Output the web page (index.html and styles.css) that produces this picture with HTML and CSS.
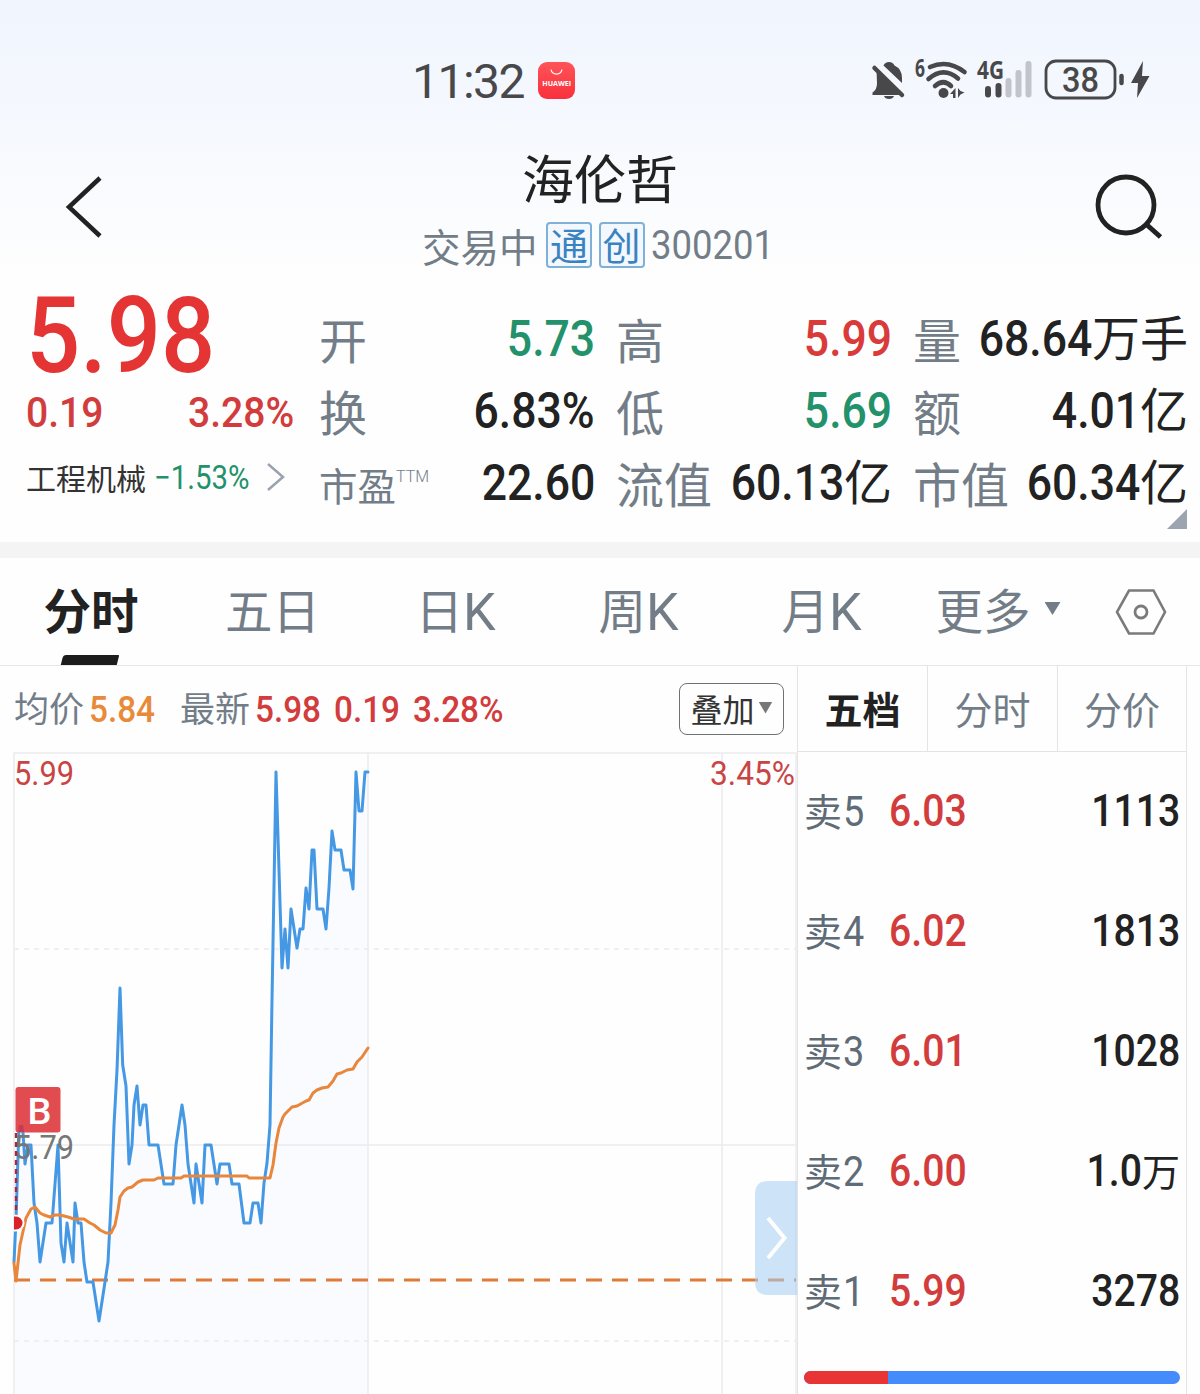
FILE: index.html
```
<!DOCTYPE html>
<html lang="zh-CN">
<head>
    <meta charset="UTF-8">
    <meta name="viewport" content="width=device-width, initial-scale=1.0">
    <title>海伦哲 300201</title>
    <link rel="stylesheet" href="styles.css">
</head>
<body>

    <div class="wrap">
        <div class="top">
            <div class="status">
                <div class="clock">11:32</div>
                <svg class="app_icon" viewBox="0 0 37 37">
                    <defs>
                        <linearGradient id="appRed" x1="0" y1="0" x2="0" y2="1">
                            <stop offset="0" stop-color="#ff5458"/>
                            <stop offset="1" stop-color="#f9303c"/>
                        </linearGradient>
                    </defs>
                    <rect width="37" height="37" rx="9" fill="url(#appRed)"/>
                    <path d="M13 7.500a5.600 5.600 0 0 0 11 0" fill="none" stroke="#fff" stroke-width="1.200"/>
                    <text x="4.200" y="23.600" textLength="29" lengthAdjust="spacingAndGlyphs" class="app_name">HUAWEI</text>
                </svg>
                <svg class="signal" viewBox="860 45 310 70">
                    <!-- bell off -->
                    <g fill="#48484a">
                        <path d="M883.500 65.500q1.500-3.500 5.500-3.500t5.500 3.500q7.500 3.500 7.500 12.500v5z"/>
                        <path d="M876.500 70L902 95H872.500v-2.500q4.500-3 4.500-9z"/>
                        <path d="M884 96h10q-1 3-5 3t-5-3z"/>
                        <path d="M874.500 68L902 95" stroke="#48484a" stroke-width="4.500" stroke-linecap="round"/>
                    </g>
                    <!-- wifi -->
                    <text x="915" y="77" textLength="10" lengthAdjust="spacingAndGlyphs" class="sig_txt">6</text>
                    <g fill="none" stroke="#48484a" stroke-width="4.600" stroke-linecap="round">
                        <path d="M930 67q18-8 34.500 5"/>
                        <path d="M928.500 79q15-13 29.500-0.500"/>
                        <path d="M935 86q8.500-7.500 16 0"/>
                    </g>
                    <circle cx="943.500" cy="93" r="5" fill="#48484a"/>
                    <path d="M950 94l5.500-6v10h-2.500v-4zM958 88v10l2.500-3.500 4-2-4-1.500z" fill="#48484a"/>
                    <!-- mobile signal -->
                    <text x="977" y="79" textLength="27" lengthAdjust="spacingAndGlyphs" class="sig_txt">4G</text>
                    <g stroke-width="6" stroke-linecap="round">
                        <path d="M988 89v5.500M998.500 86v8.500" stroke="#48484a"/>
                        <path d="M1008.500 81v13.500M1018.500 73v21.500M1028.500 64v30.500" stroke="#c1c4c9"/>
                    </g>
                    <!-- battery -->
                    <rect x="1046" y="61" width="69" height="37" rx="10" fill="none" stroke="#48484a" stroke-width="2.800"/>
                    <path d="M1121.500 76v7" stroke="#48484a" stroke-width="4.500" stroke-linecap="round"/>
                    <text x="1062" y="91.500" textLength="37" lengthAdjust="spacingAndGlyphs" class="bat_txt">38</text>
                    <path d="M1143 61l-12 22h7l-1 15 12.500-22h-7.500z" fill="#48484a"/>
                </svg>
            </div>

            <div class="title_bar">
                <svg class="back" viewBox="0 0 40 66"><path d="M35 4L4 33l31 29" fill="none" stroke="#222" stroke-width="4.500"/></svg>
                <div class="title">
                    <h1>海伦哲</h1>
                    <div class="sub">
                        <span>交易中</span>
                        <i class="tag">通</i>
                        <i class="tag">创</i>
                        <b class="num code">300201</b>
                    </div>
                </div>
                <svg class="search" viewBox="0 0 70 66">
                    <circle cx="31" cy="31" r="28" fill="none" stroke="#222" stroke-width="4.800"/>
                    <path d="M51 50l14.500 13" stroke="#222" stroke-width="5"/>
                </svg>
            </div>

            <div class="quote">
                <div class="price">
                    <div class="now"><b class="num">5.98</b></div>
                    <div class="change"><b class="num left">0.19</b><b class="num">3.28%</b></div>
                    <div class="sector">
                        <span>工程机械</span>
                        <b class="num left">−1.53%</b>
                        <svg viewBox="0 0 20 30"><path d="M2 2l15 13L2 28" fill="none" stroke="#9aa3ad" stroke-width="2.500"/></svg>
                    </div>
                </div>
                <div class="item"><span>开</span><em class="green"><b class="num">5.73</b></em></div>
                <div class="item"><span>高</span><em class="red"><b class="num">5.99</b></em></div>
                <div class="item"><span>量</span><em><b class="num">68.64</b>万手</em></div>
                <div class="item"><span>换</span><em><b class="num">6.83%</b></em></div>
                <div class="item"><span>低</span><em class="green"><b class="num">5.69</b></em></div>
                <div class="item"><span>额</span><em><b class="num">4.01</b>亿</em></div>
                <div class="item"><span class="pe">市盈<sup>TTM</sup></span><em><b class="num">22.60</b></em></div>
                <div class="item"><span>流值</span><em><b class="num">60.13</b>亿</em></div>
                <div class="item"><span>市值</span><em><b class="num">60.34</b>亿</em></div>
                <div class="corner"></div>
            </div>
        </div>

        <div class="tabs">
            <div class="tab on">分时</div>
            <div class="tab">五日</div>
            <div class="tab">日<b>K</b></div>
            <div class="tab">周<b>K</b></div>
            <div class="tab">月<b>K</b></div>
            <div class="tab">更多<i class="arrow"></i></div>
            <div class="tab set">
                <svg class="setting" viewBox="0 0 52 46">
                    <path d="M14 1.500h24.500L50 23 38.500 44.500H14L2 23z" fill="none" stroke="#7b7b7b" stroke-width="2.600"/>
                    <circle cx="26" cy="23" r="6" fill="none" stroke="#7b7b7b" stroke-width="2.800"/>
                </svg>
            </div>
        </div>

        <div class="cont">
            <div class="chart_box">
                <div class="info">
                    <span>均价</span><b class="num left orange">5.84</b>
                    <span>最新</span><b class="num left">5.98</b><b class="num left">0.19</b><b class="num left last">3.28%</b>
                    <div class="overlay">叠加<i class="arrow"></i></div>
                </div>
                <svg class="chart" viewBox="0 752 797 642">
                    <!-- area under price -->
                    <path class="area" d="M14 1394V1262L16 1220L19 1125H22.500L25 1164L28 1145H31L34 1203L37 1223L40 1262L46 1223H52L58 1145L61 1243L64 1262L67 1223L73 1262L75 1203L78 1223H81L84 1262L87 1282H93L99 1321L105 1282L108 1262L111 1203L114 1125L117 1070L120 988L122.700 1065L126 1086L129 1164L132 1145L134 1105L137 1086L140 1125L143 1105H146L149 1145H158L164 1184H173L176 1145L182 1105L185 1125L188 1164L194 1203L196 1164L202 1203L205 1145H211L217 1184L220 1164H229L232 1184H239L244 1223H250L253 1203H258L261 1223L264 1183L267 1163L270 1125L272 1000L276 772L279 870L282 968L285 929L288 968L291 909L297 948L300 929H303L306 888L309 909L312 850H314L317 909H323L326 929L329 888L332 831L335 850H341L344 870H350L353 889L356 772L359 811H362L365 772H368V1394Z"/>
                    <!-- grid -->
                    <path class="grid" d="M14 1394V753H796V1394M368 753V1394M722 753V1394M14 1145H796"/>
                    <path class="grid dash" d="M14 949H796M14 1341H796"/>
                    <path class="hold" d="M14 1280H796"/>
                    <path class="line" d="M14 1262L16 1220L19 1125H22.500L25 1164L28 1145H31L34 1203L37 1223L40 1262L46 1223H52L58 1145L61 1243L64 1262L67 1223L73 1262L75 1203L78 1223H81L84 1262L87 1282H93L99 1321L105 1282L108 1262L111 1203L114 1125L117 1070L120 988L122.700 1065L126 1086L129 1164L132 1145L134 1105L137 1086L140 1125L143 1105H146L149 1145H158L164 1184H173L176 1145L182 1105L185 1125L188 1164L194 1203L196 1164L202 1203L205 1145H211L217 1184L220 1164H229L232 1184H239L244 1223H250L253 1203H258L261 1223L264 1183L267 1163L270 1125L272 1000L276 772L279 870L282 968L285 929L288 968L291 909L297 948L300 929H303L306 888L309 909L312 850H314L317 909H323L326 929L329 888L332 831L335 850H341L344 870H350L353 889L356 772L359 811H362L365 772H368"/>
                    <path class="avg" d="M14 1263L16 1281L20 1245L26 1218L31 1209L35 1207L40 1213L44 1215L50 1217L55 1215H60L68 1217L74 1219H84L90 1223L94 1225L100 1230L106 1233H111L115 1225L118 1210L120 1197L124 1191L128 1188L132 1187L138 1182L143 1180H154L158 1178H181L184 1176H247L249 1178H270L273 1165L276 1143L279 1128L283 1117L285 1114L292 1107L297 1106L306 1101L309 1100L313 1093L317 1090L322 1088L328 1087L333 1081L337 1074L341 1073L347 1070L353 1069L357 1062L362 1057L368 1048"/>
                    <!-- labels -->
                    <text x="14" y="785" textLength="60" lengthAdjust="spacingAndGlyphs" class="lbl up">5.99</text>
                    <text x="710" y="785" textLength="85" lengthAdjust="spacingAndGlyphs" class="lbl up">3.45%</text>
                    <text x="14" y="1159" textLength="60" lengthAdjust="spacingAndGlyphs" class="lbl">5.79</text>
                    <!-- buy mark -->
                    <path d="M16 1133V1216" stroke="#a8283c" stroke-width="2.400" stroke-dasharray="5 4"/>
                    <path d="M14 1214.500h2a8.500 8.500 0 0 1 0 17h-2z" fill="#fff"/>
                    <path d="M14 1216.500h2a6.500 6.500 0 0 1 0 13h-2z" fill="#d9232b"/>
                    <rect x="15.500" y="1087" width="45" height="45.500" rx="3" fill="#e04c50"/>
                    <path d="M19 1125h4l1 7h-6z" fill="#c33b54"/>
                    <text x="27.500" y="1124" textLength="24" lengthAdjust="spacingAndGlyphs" class="mark">B</text>
                    <!-- drawer handle -->
                    <path d="M797 1181H768q-13 0-13 13v88q0 13 13 13h29z" fill="#a6cdf2" fill-opacity=".56"/>
                    <path d="M768 1218l16.500 20-16.500 20" fill="none" stroke="#fff" stroke-width="4"/>
                </svg>
            </div>

            <div class="book">
                <div class="book_tabs">
                    <div class="on">五档</div>
                    <div>分时</div>
                    <div>分价</div>
                </div>
                <div class="row"><span>卖<b class="num left">5</b></span><b class="num left">6.03</b><em><b class="num">1113</b></em></div>
                <div class="row"><span>卖<b class="num left">4</b></span><b class="num left">6.02</b><em><b class="num">1813</b></em></div>
                <div class="row"><span>卖<b class="num left">3</b></span><b class="num left">6.01</b><em><b class="num">1028</b></em></div>
                <div class="row"><span>卖<b class="num left">2</b></span><b class="num left">6.00</b><em><b class="num">1.0</b>万</em></div>
                <div class="row"><span>卖<b class="num left">1</b></span><b class="num left">5.99</b><em><b class="num">3278</b></em></div>
                <div class="ratio"><i></i></div>
            </div>
        </div>
    </div>

</body>
</html>
```
FILE: styles.css
```
*{margin:0;padding:0;box-sizing:border-box;}
body{width:1200px;height:1394px;overflow:hidden;background:#fefefe;color:#222;font-family:"Noto Sans CJK SC","Noto Sans",sans-serif;}
i,em{font-style:normal;}
svg{display:block;flex:none;}
.wrap{width:1200px;height:1394px;overflow:hidden;}

/* narrow digits */
.num{display:inline-block;font-family:Roboto,sans-serif;font-weight:500;transform:scaleX(.9);transform-origin:100% 50%;white-space:nowrap;}
.num.left{transform-origin:0 50%;}
.red{color:#d93b3b;}
.green{color:#23916a;}

.top{height:558px;border-bottom:16px solid #f4f4f4;background:linear-gradient(#f0f5fe 0,#f5f8fe 110px,#fefefe 280px);}

/* status bar */
.status{height:140px;display:flex;padding:45px 30px 0 412px;}
.clock{width:126px;height:70px;line-height:73px;font-family:Roboto,sans-serif;font-size:48px;color:#48484a;letter-spacing:-1.500px;}
.app_icon{width:37px;height:37px;margin-top:17px;}
.app_name{font:bold 7px "Open Sans",sans-serif;fill:#fff;}
.signal{width:310px;height:70px;margin-left:auto;}
.sig_txt{font:bold 25px "Open Sans",sans-serif;fill:#48484a;}
.bat_txt{font:500 35px Roboto,sans-serif;fill:#48484a;}

/* title */
.title_bar{height:150px;display:flex;padding:0 35px 0 65px;}
.back{width:40px;height:66px;margin-top:34px;}
.search{width:70px;height:66px;margin:34px 0 0 auto;}
.title{width:360px;margin-left:315px;text-align:center;}
.title h1{height:78px;line-height:73px;font-size:52px;font-weight:400;}
.sub{height:54px;display:flex;align-items:center;padding-left:2px;font-size:38.500px;line-height:50px;color:#727d88;}
.sub span{flex:none;width:124px;text-align:left;white-space:nowrap;}
.tag{flex:none;width:46px;height:46px;line-height:40px;margin-right:6.500px;border:2px solid #7fb0d8;border-radius:4px;background:#f2f8fe;color:#3b82c0;font-size:38px;text-align:center;}
.sub .code{font-size:41px;font-weight:400;transform:scaleX(.89);transform-origin:0 50%;}

/* quote */
.quote{position:relative;height:252px;padding:14px 12px 0 26px;display:grid;grid-template-columns:293px 276px 297px 296px;grid-template-rows:repeat(3,72px);}
.price{grid-row:1 / 4;width:268px;}
.now{height:80px;margin-top:-8px;color:#e43434;}
.now .num{font-size:106px;line-height:80px;transform-origin:0 50%;}
.change{height:72px;display:flex;justify-content:space-between;align-items:center;color:#d23c3c;}
.change .num{font-size:42px;transform:scaleX(.93);}
.sector{height:58px;display:flex;align-items:center;font-size:30px;color:#333;}
.sector span{width:128px;}
.sector .num{width:112px;font-size:33px;font-weight:400;color:#23916a;transform:scaleX(.89);}
.sector svg{width:20px;height:30px;}
.item{display:flex;justify-content:space-between;line-height:68px;font-size:48px;}
.item:nth-child(3n),.item:nth-child(3n+1){padding-left:21px;}
.item span{color:#727d88;}
.item em{margin-top:-3px;white-space:nowrap;}
.item .num{font-size:49.500px;}
.item .pe{font-size:38.500px;line-height:72px;}
.pe sup{font:300 16px/20px Roboto,sans-serif;vertical-align:19px;}
.corner{position:absolute;right:13px;bottom:13px;width:20px;height:20px;background:#9ca5af;clip-path:polygon(100% 0,100% 100%,0 100%);}

/* period tabs */
.tabs{height:108px;display:grid;grid-template-columns:repeat(5,183px) 166px 1fr;border-bottom:1px solid #e6e6e6;}
.tab{position:relative;display:flex;justify-content:center;align-items:center;height:107px;padding:0 4px 6px 0;font-size:47.500px;color:#727d88;}
.tab b{margin-top:7px;font-family:Roboto,sans-serif;font-weight:400;font-size:52px;}
.tab.on{padding-right:1px;font-weight:700;color:#222;}
.tab.on::after{content:"";position:absolute;left:62px;bottom:0;width:56px;height:10px;background:#1c1c1c;border-radius:3px 1px 0 0;transform:skewX(-14deg);}
.tab.set{padding:0;}
.arrow{width:16px;height:13px;margin-left:14px;background:#727d88;clip-path:polygon(0 0,100% 0,50% 100%);}
.tab:nth-child(6){padding-right:0;}
.setting{width:52px;height:46px;}

/* chart */
.cont{display:flex;height:728px;}
.chart_box{width:797px;}
.info{height:86px;display:flex;align-items:center;padding:0 13px 0 14px;font-size:35px;color:#727d88;}
.info .num{width:79px;font-size:37px;color:#d23c3c;}
.info .orange{width:91px;color:#e88a3a;}
.info span{width:75px;line-height:50px;margin-top:-4px;}
.info .last{width:100px;}
.overlay{display:flex;align-items:center;justify-content:center;width:105px;height:52px;margin-left:auto;padding-bottom:3px;border:1.500px solid #6d7373;border-radius:8px;font-size:32px;color:#333;}
.overlay .arrow{margin-left:4px;width:14px;height:12px;background:#777;}
.chart{width:797px;height:642px;}
.area{fill:#f9fbff;}
.grid{fill:none;stroke:#ebecef;stroke-width:1.500;}
.dash{stroke-dasharray:5 5;}
.hold{stroke:#e07a38;stroke-width:3;stroke-dasharray:16 10;}
.line{fill:none;stroke:#4498e4;stroke-width:3;stroke-linejoin:round;stroke-linecap:round;}
.avg{fill:none;stroke:#e8863c;stroke-width:3;stroke-linejoin:round;stroke-linecap:round;}
.lbl{font:400 33px Roboto,sans-serif;fill:#777;}
.up{fill:#c94444;}
.mark{font:500 37px Roboto,sans-serif;fill:#fff;}

/* order book */
.book{width:390px;border-left:1.500px solid #e4e4e4;border-right:1.500px solid #e4e4e4;}
.book_tabs{display:grid;grid-template-columns:129px 130px 1fr;height:86px;border-bottom:1px solid #e4e4e4;}
.book_tabs div{text-align:center;font-size:38px;line-height:83px;color:#727d88;border-left:1px solid #e4e4e4;}
.book_tabs .on{font-weight:700;color:#222;border-left:0;}
.row{height:120px;line-height:116px;display:flex;padding:0 6px 0 6px;font-size:38px;}
.row span{width:85px;color:#5f6b76;}
.row span .num{font-size:43px;font-weight:400;margin-left:1px;color:#5f6b76;}
.row .num{font-size:44.500px;line-height:118px;color:#d23c3c;transform:scaleX(.88);}
.row em{margin-left:auto;color:#222;}
.row em .num{color:#222;}
.ratio{height:13px;margin:19px 6px 0;border-radius:7px;background:#448cfb;overflow:hidden;}
.ratio i{display:block;width:84px;height:13px;background:#e83434;}
```
